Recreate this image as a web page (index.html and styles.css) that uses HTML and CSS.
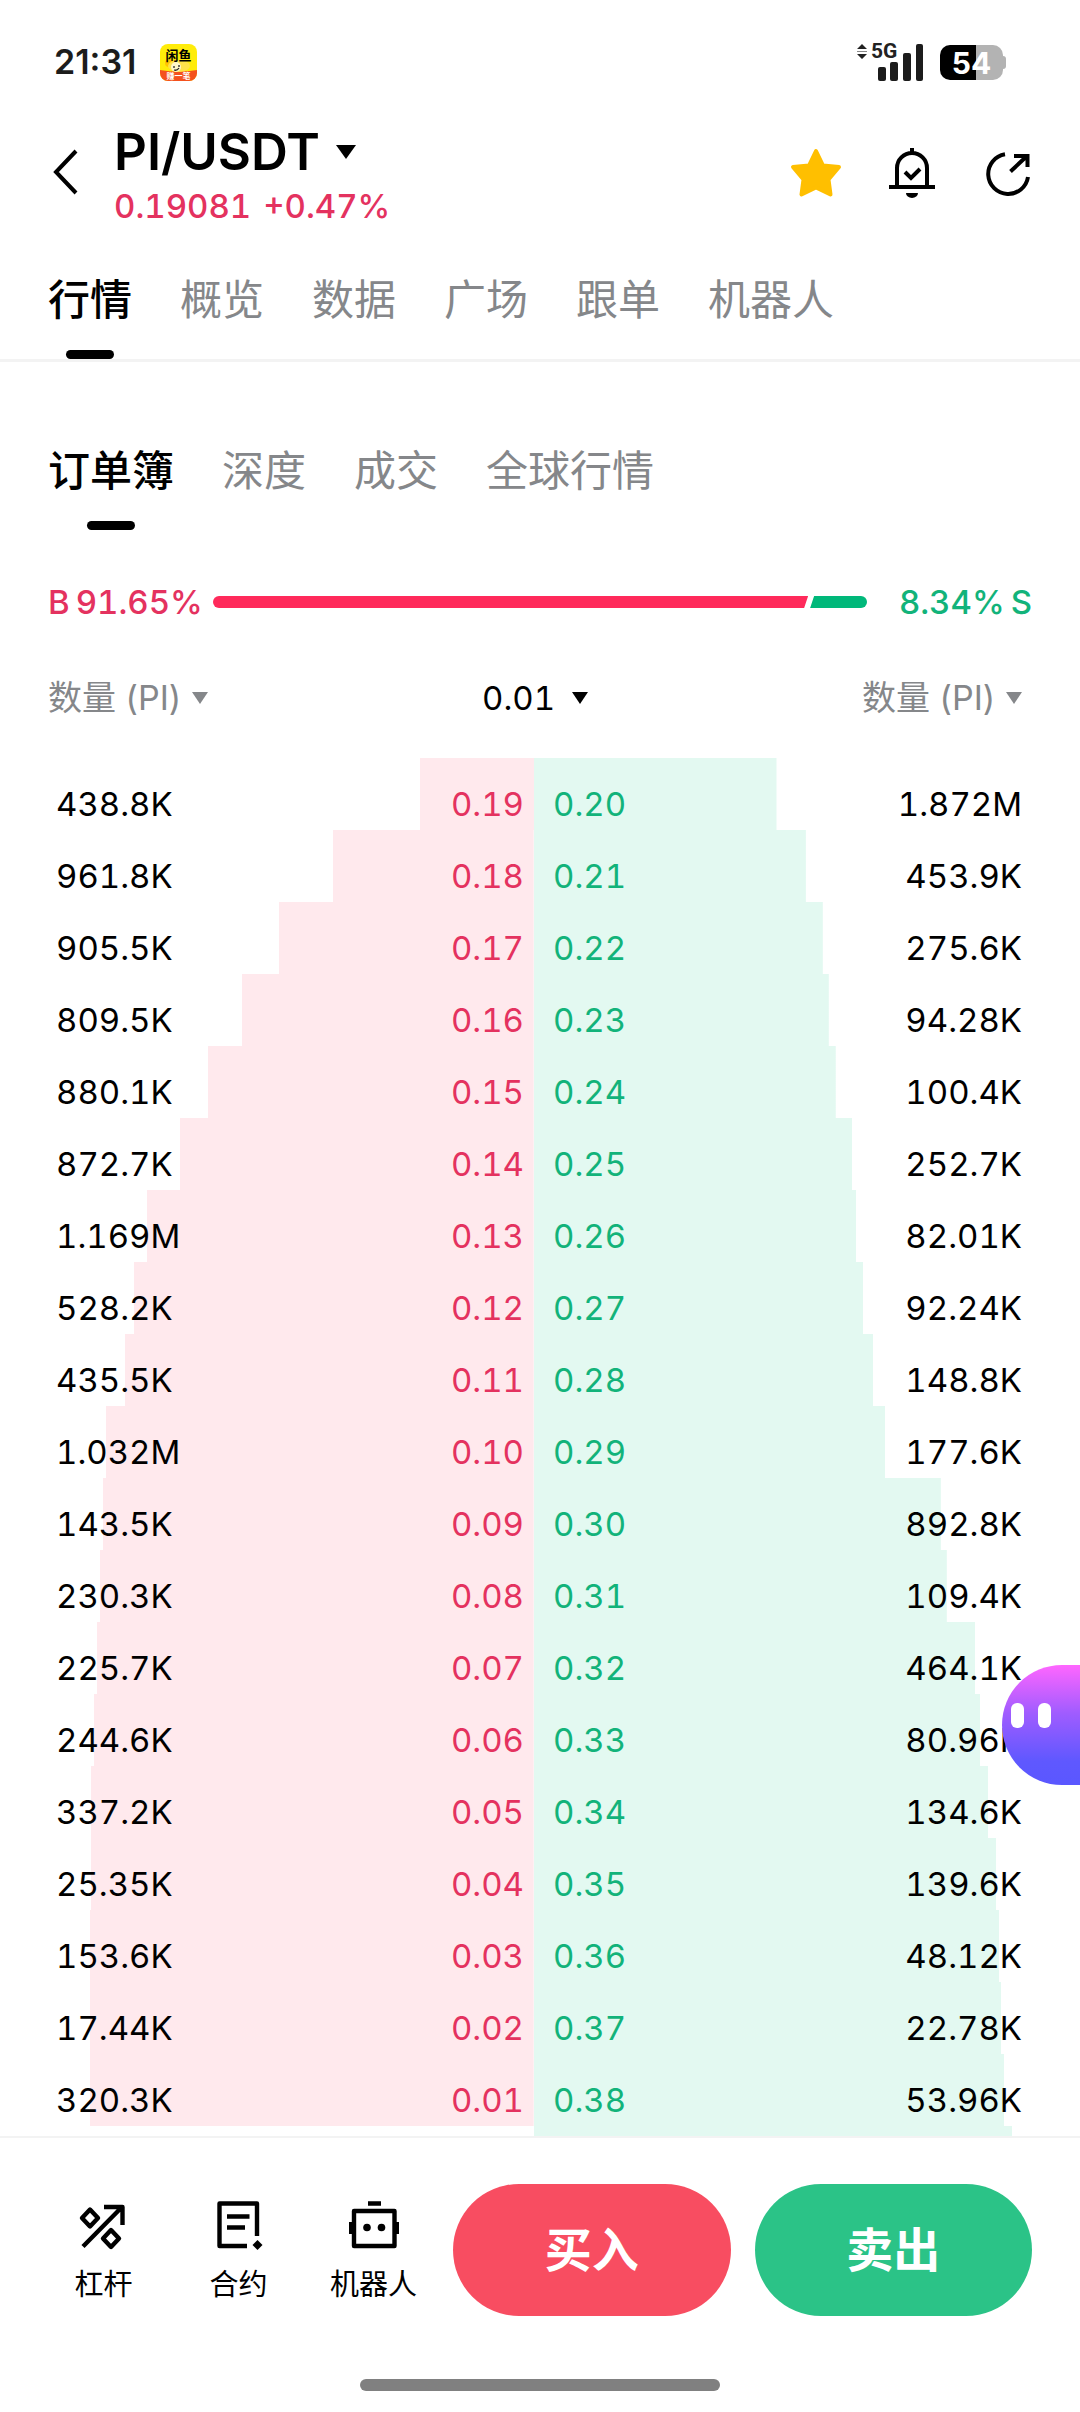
FILE: index.html
```html
<!DOCTYPE html>
<html lang="zh-CN">
<head>
    <meta charset="utf-8">
    <meta name="viewport" content="width=device-width, initial-scale=1">
    <title>PI/USDT</title>
    <link rel="stylesheet" href="styles.css">
</head>
<body>
    <div class="app">

        <div class="status-bar">
            <span class="time">21:31</span>
            <svg class="app-badge" viewBox="0 0 37 37">
                <defs>
                    <clipPath id="badgeClip"><rect width="37" height="37" rx="8"/></clipPath>
                </defs>
                <g clip-path="url(#badgeClip)">
                    <rect width="37" height="37" fill="#ffec0a"/>
                    <path d="M0 26q18 3 37 0v11H0z" fill="#f4511e"/>
                    <circle cx="9" cy="19" r="4" fill="#ffc400"/>
                    <ellipse cx="19" cy="22" rx="11" ry="6" fill="#ffe14a"/>
                    <ellipse cx="16" cy="23" rx="5" ry="5" fill="#fff6c8"/>
                    <path d="M14 22v2M19 21v2M14 26q3 1 5-2" fill="none" stroke="#222" stroke-width="1.3"/>
                </g>
                <text x="18.500" y="16" class="badge-name">闲鱼</text>
                <text x="18.500" y="35" class="badge-tag">赚一笔</text>
            </svg>
            <svg class="signal" viewBox="0 0 68 38">
                <path d="M1 6l5-5 5 5zM1 11l5 5 5-5z" fill="#222"/>
                <path d="M1 8.500h10" stroke="#888" stroke-width="1"/>
                <text x="15" y="15" class="net">5G</text>
                <g fill="#1c1c1c">
                    <rect x="22" y="24" width="8" height="14" rx="2"/>
                    <rect x="34" y="19" width="8" height="19" rx="2"/>
                    <rect x="47" y="10" width="8" height="28" rx="2"/>
                    <rect x="60" y="1" width="7" height="37" rx="2"/>
                </g>
            </svg>
            <div class="battery"><span>54</span></div>
        </div>

        <header class="header">
            <button class="back" aria-label="返回">
                <svg viewBox="0 0 30 48"><path d="M28 3L8 24l20 21"/></svg>
            </button>
            <div class="pair">
                <button class="pair-name">PI/USDT
                    <svg viewBox="0 0 20 14"><path d="M0 0h20L10 14z"/></svg>
                </button>
                <div class="pair-price"><span>0.19081</span><span>+0.47%</span></div>
            </div>
            <div class="actions">
                <button aria-label="收藏">
                    <svg viewBox="0 0 48 48"><path class="star" d="M24 3L31 17.500 47 19 36.500 31.500 38.500 46.500 24 39.500 9.500 46.500 11.500 31.500 1 19 17 17.500z"/></svg>
                </button>
                <button aria-label="提醒">
                    <svg viewBox="0 0 48 48">
                        <path d="M9 39V20a15 15 0 0 1 30 0v19M1 39h46M24 5V0M17 24l6 6 9-9"/>
                        <path class="solid" d="M18 45h12a6 5 0 0 1-12 0z"/>
                    </svg>
                </button>
                <button aria-label="分享">
                    <svg viewBox="0 0 48 48"><path d="M21 6.200A20 20 0 1 0 44 29M26.500 23.500L43 8M30 8h13.500v11"/></svg>
                </button>
            </div>
        </header>

        <nav class="tabs main-tabs">
            <a href="#" class="active">行情</a>
            <a href="#">概览</a>
            <a href="#">数据</a>
            <a href="#">广场</a>
            <a href="#">跟单</a>
            <a href="#">机器人</a>
        </nav>

        <nav class="tabs sub-tabs">
            <a href="#" class="active">订单簿</a>
            <a href="#">深度</a>
            <a href="#">成交</a>
            <a href="#">全球行情</a>
        </nav>

        <div class="ratio">
            <div class="ratio-buy"><span>B</span><span>91.65%</span></div>
            <div class="ratio-bar">
                <div class="bar-buy" style="width: 91%"></div>
                <div class="bar-sell"></div>
            </div>
            <div class="ratio-sell"><span>8.34%</span><span>S</span></div>
        </div>

        <div class="filters">
            <label class="filter">
                <select aria-label="买单单位"><option>数量 (PI)</option></select>
                <svg viewBox="0 0 36 36"><path d="M10 12h16l-8 12z"/></svg>
            </label>
            <label class="filter step">
                <select aria-label="价格精度"><option>0.01</option></select>
                <svg viewBox="0 0 36 36"><path d="M10 12h16l-8 12z"/></svg>
            </label>
            <label class="filter">
                <select aria-label="卖单单位"><option>数量 (PI)</option></select>
                <svg viewBox="0 0 36 36"><path d="M10 12h16l-8 12z"/></svg>
            </label>
        </div>

        <main class="book">
            <table class="bids"><tbody id="bids"></tbody></table>
            <table class="asks"><tbody id="asks"></tbody></table>
        </main>

        <footer class="footer">
            <div class="footer-row">
                <nav class="shortcuts">
                    <a href="#">
                        <svg viewBox="0 0 60 60"><path d="M16 14.500l8 8.500-8 8.500L8 23zM37 35l8 8.500-8 8.500-8-8.500zM9 51.500L48 12M30 12h18.500v18"/></svg>
                        杠杆
                    </a>
                    <a href="#">
                        <svg viewBox="0 0 60 60">
                            <path d="M48 41V8.500H10.500V51H38M18 21.500h22.500M18 32.500h18"/>
                            <path class="solid" d="M48.500 45l5 5-5 5-5-5z"/>
                        </svg>
                        合约
                    </a>
                    <a href="#">
                        <svg viewBox="0 0 60 60">
                            <path d="M10 16h40.500v35H10zM24 8.500h13"/>
                            <path class="solid" d="M5 27h4v12H5zM51 27h4v12h-4z"/>
                            <circle class="solid" cx="23" cy="32.500" r="3.800"/>
                            <circle class="solid" cx="37.500" cy="32.500" r="3.800"/>
                        </svg>
                        机器人
                    </a>
                </nav>
                <button class="trade buy">买入</button>
                <button class="trade sell">卖出</button>
            </div>
            <div class="home-bar"></div>
        </footer>

        <button class="assistant" aria-label="助手"><i></i><i></i></button>
    </div>

    <script src="book.js"></script>
</body>
</html>
```
FILE: styles.css
```css
* {
    box-sizing: border-box;
}

body {
    margin: 0;
    background: #fff;
    color: #000;
    font-family: Inter, "Noto Sans CJK SC", sans-serif;
    font-size: 34px;
    line-height: 48px;
}

button {
    padding: 0;
    border: none;
    background: none;
    color: inherit;
    font: inherit;
    cursor: pointer;
}

a {
    color: inherit;
    text-decoration: none;
}

svg {
    display: block;
    overflow: visible;
}

.app {
    display: flex;
    flex-direction: column;
    height: 100vh;
    overflow: hidden;
}

/* status bar */
.status-bar {
    display: flex;
    align-items: center;
    height: 118px;
    padding: 6px 72px 0 54px;
}

.time {
    font-size: 34px;
    font-weight: 600;
    color: #1c1c1c;
}

.app-badge {
    width: 37px;
    height: 37px;
    margin-left: 24px;
}

.badge-name {
    font-size: 13px;
    font-weight: 700;
    text-anchor: middle;
}

.badge-tag {
    font-size: 8px;
    font-weight: 700;
    fill: #fff;
    text-anchor: middle;
}

.signal {
    width: 68px;
    height: 38px;
    margin-left: auto;
}

.net {
    font-family: Roboto, sans-serif;
    font-size: 21px;
    font-weight: 700;
    fill: #222;
}

.battery {
    position: relative;
    width: 63px;
    height: 35px;
    margin: 0 5px 0 16px;
    border-radius: 10px;
    background: linear-gradient(to right, #000 36px, #b3b3b3 36px);
    color: #fff;
    font-size: 30px;
    font-weight: 700;
    line-height: 36px;
    text-align: center;
}

.battery::after {
    content: "";
    position: absolute;
    top: 11px;
    right: -3px;
    width: 3px;
    height: 13px;
    border-radius: 0 3px 3px 0;
    background: #b3b3b3;
}

/* header */
.header {
    display: flex;
    align-items: center;
    height: 108px;
    padding: 0 48px;
}

.back svg {
    width: 30px;
    height: 48px;
    fill: none;
    stroke: #000;
    stroke-width: 4;
}

.pair {
    margin-left: 36px;
    padding-top: 8px;
}

.pair-name {
    display: flex;
    align-items: center;
    gap: 16px;
    font-size: 51px;
    font-weight: 600;
    line-height: 60px;
}

.pair-name svg {
    width: 20px;
    height: 14px;
}

.pair-price {
    display: flex;
    gap: 12px;
    color: #e4325f;
    font-weight: 500;
    font-size: 33px;
    line-height: 48px;
    font-variant-numeric: tabular-nums;
}

.actions {
    display: flex;
    gap: 48px;
    margin-left: auto;
}

.actions svg {
    width: 48px;
    height: 48px;
    fill: none;
    stroke: #000;
    stroke-width: 4;
}

.actions .star {
    fill: #ffbf00;
    stroke: #ffbf00;
    stroke-linejoin: round;
}

.actions .solid {
    fill: #000;
    stroke: none;
}

/* tabs */
.tabs {
    display: flex;
    gap: 48px;
    padding: 0 48px;
    color: #85878a;
    font-size: 42px;
    line-height: 60px;
}

.tabs a::after {
    content: "";
    display: block;
    width: 48px;
    height: 9px;
    margin: 20px auto 0;
    border-radius: 5px;
}

.tabs .active {
    color: #000;
    font-weight: 500;
}

.tabs .active::after {
    background: #000;
}

.main-tabs {
    padding-top: 44px;
    border-bottom: 3px solid #f3f3f3;
}

.sub-tabs {
    padding-top: 79px;
}

/* buy / sell ratio */
.ratio {
    display: grid;
    grid-template-columns: 153px 1fr 153px;
    align-items: center;
    gap: 12px;
    margin-top: 48px;
    padding: 0 48px;
    font-size: 33px;
    font-weight: 500;
    font-variant-numeric: tabular-nums;
    white-space: nowrap;
}

.ratio-buy,
.ratio-sell {
    display: flex;
    gap: 6px;
}

.ratio-buy {
    color: #e4325f;
}

.ratio-sell {
    justify-content: flex-end;
    color: #12b37a;
}

.ratio-bar {
    display: flex;
    height: 12px;
    border-radius: 6px;
    overflow: hidden;
}

.bar-buy {
    background: #ff2a5b;
    clip-path: polygon(0 0, 100% 0, calc(100% - 4px) 100%, 0 100%);
}

.bar-sell {
    flex: 1;
    background: #00b87a;
    clip-path: polygon(6px 0, 100% 0, 100% 100%, 2px 100%);
}

/* column selectors */
.filters {
    display: grid;
    grid-template-columns: 1fr auto 1fr;
    margin: 48px 0 36px;
    padding: 0 48px;
    color: #85878a;
}

.filter {
    display: flex;
    align-items: center;
}

.filter:last-child {
    justify-content: flex-end;
}

.filter select {
    appearance: none;
    padding: 0;
    border: none;
    background: none;
    color: inherit;
    font: inherit;
}

.filter svg {
    width: 36px;
    height: 36px;
    fill: currentColor;
}

.step {
    gap: 6px;
    color: #000;
    font-size: 33px;
    font-variant-numeric: tabular-nums;
}

/* order book */
.book {
    display: grid;
    grid-template-columns: 486fr 498fr;
    align-items: start;
    flex: 1;
    min-height: 0;
    padding: 0 48px;
    overflow: hidden;
}

.book table {
    width: 100%;
    border-collapse: collapse;
    font-size: 33px;
    line-height: 52px;
    font-variant-numeric: tabular-nums;
}

.book tr {
    height: 72px;
    background-repeat: no-repeat;
    background-size: var(--depth) 100%;
}

.book td {
    padding: 20px 10px 0 8px;
}

.book td:last-child {
    text-align: right;
}

.bids tr {
    background-image: linear-gradient(#ffe9ed, #ffe9ed);
    background-position: right;
}

.bids td:last-child {
    color: #e4325f;
}

.asks tr {
    background-image: linear-gradient(#e3f9f1, #e3f9f1);
}

.asks td:first-child {
    padding-left: 19px;
    color: #12b37a;
}

/* footer */
.footer {
    padding: 46px 0 21px;
    border-top: 2px solid #f3f3f3;
    background: #fff;
}

.footer-row {
    display: grid;
    grid-template-columns: 393px 1fr 1fr;
    align-items: center;
    gap: 24px;
    padding: 0 48px 0 36px;
}

.shortcuts {
    display: grid;
    grid-template-columns: repeat(3, 135px);
}

.shortcuts a {
    display: flex;
    flex-direction: column;
    align-items: center;
    gap: 10px;
    font-size: 29px;
    line-height: 40px;
}

.shortcuts svg {
    width: 60px;
    height: 60px;
    fill: none;
    stroke: #000;
    stroke-width: 4.4;
    stroke-linejoin: round;
}

.shortcuts .solid {
    fill: #000;
    stroke: none;
}

.trade {
    height: 132px;
    border-radius: 66px;
    color: #fff;
    font-size: 47px;
    font-weight: 700;
}

.buy {
    background: #f84d61;
}

.sell {
    background: #2bc387;
}

.home-bar {
    width: 360px;
    height: 12px;
    margin: 63px auto 0;
    border-radius: 6px;
    background: #808080;
}

/* floating assistant, half off the right edge */
.assistant {
    position: fixed;
    right: 0;
    bottom: 627px;
    display: flex;
    gap: 14px;
    width: 78px;
    height: 120px;
    padding: 38px 0 0 9px;
    border-radius: 60px 0 0 60px;
    background: linear-gradient(#ff66ff, #a05cff 40%, #5f58ff 80%, #5a57ff);
}

.assistant i {
    width: 13px;
    height: 25px;
    border-radius: 6px;
    background: #fff;
}
```
FILE: book.js
```javascript
// [price, amount, depth %]
const bids = [
    ["0.19", "438.8K", 23.5],
    ["0.18", "961.8K", 41.4],
    ["0.17", "905.5K", 52.5],
    ["0.16", "809.5K", 60.1],
    ["0.15", "880.1K", 67.1],
    ["0.14", "872.7K", 72.8],
    ["0.13", "1.169M", 79.6],
    ["0.12", "528.2K", 82.3],
    ["0.11", "435.5K", 84.2],
    ["0.10", "1.032M", 88.1],
    ["0.09", "143.5K", 88.7],
    ["0.08", "230.3K", 89.3],
    ["0.07", "225.7K", 89.9],
    ["0.06", "244.6K", 90.5],
    ["0.05", "337.2K", 91.1],
    ["0.04", "25.35K", 91.1],
    ["0.03", "153.6K", 91.4],
    ["0.02", "17.44K", 91.4],
    ["0.01", "320.3K", 91.4]
];

const asks = [
    ["0.20", "1.872M", 48.7],
    ["0.21", "453.9K", 54.6],
    ["0.22", "275.6K", 58],
    ["0.23", "94.28K", 59.2],
    ["0.24", "100.4K", 60.6],
    ["0.25", "252.7K", 63.9],
    ["0.26", "82.01K", 64.7],
    ["0.27", "92.24K", 66.1],
    ["0.28", "148.8K", 68.1],
    ["0.29", "177.6K", 70.5],
    ["0.30", "892.8K", 81.7],
    ["0.31", "109.4K", 82.9],
    ["0.32", "464.1K", 88.6],
    ["0.33", "80.96K", 89.6],
    ["0.34", "134.6K", 91.2],
    ["0.35", "139.6K", 92.8],
    ["0.36", "48.12K", 93.4],
    ["0.37", "22.78K", 93.8],
    ["0.38", "53.96K", 94.4],
    ["", "", 96]
];

function row(first, second, depth) {
    return `<tr style="--depth: ${depth}%"><td>${first}</td><td>${second}</td></tr>`;
}

document.getElementById("bids").innerHTML = bids.map(([price, amount, depth]) => row(amount, price, depth)).join("");
document.getElementById("asks").innerHTML = asks.map(([price, amount, depth]) => row(price, amount, depth)).join("");
```
